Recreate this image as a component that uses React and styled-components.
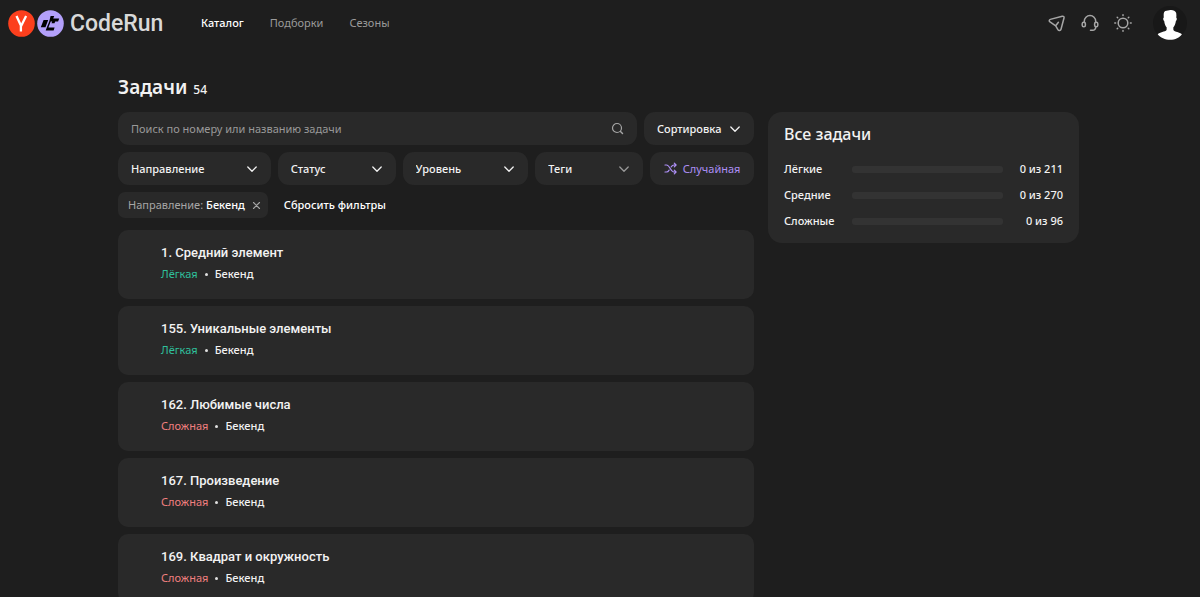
import React from 'react';
import styled, { createGlobalStyle } from 'styled-components';

const GlobalStyle = createGlobalStyle`
    * {
        box-sizing: border-box;
    }

    body {
        margin: 0;
        background-color: #1e1e1e;
        color: #f2f2f2;
        font-family: "Noto Sans", "Open Sans", sans-serif;
        font-size: 11px;
        line-height: 18px;
    }

    button, input, select {
        font: inherit;
        color: inherit;
        border: 0;
        margin: 0;
        background: none;
    }

    button {
        cursor: pointer;
    }

    a {
        color: inherit;
        text-decoration: none;
    }

    svg {
        display: block;
        flex-shrink: 0;
    }
`;

const Header = styled.header`
    display: flex;
    align-items: center;
    height: 46px;
    padding: 0 13px 0 8px;
`;

const Logo = styled.a`
    display: flex;
    align-items: center;
    gap: 2px;
    width: 193px;
`;

const LogoText = styled.span`
    padding: 2px 0 0 4px;
    font-family: Roboto, sans-serif;
    font-size: 23px;
    line-height: 28px;
    font-weight: 500;
    color: #d9d9d9;
`;

const Nav = styled.nav`
    display: flex;
    gap: 26px;
    flex: 1;
`;

const NavLink = styled.a`
    color: ${({ $active }) => ($active ? '#ffffff' : '#9a9a9a')};
    font-weight: ${({ $active }) => ($active ? 500 : 400)};
`;

const HeaderActions = styled.div`
    display: flex;
    align-items: center;
    gap: 15px;
`;

const IconButton = styled.button`
    padding: 0;
    color: #a6a6a6;
`;

const AvatarButton = styled.button`
    margin-left: 6px;
    padding: 0;
`;

const Layout = styled.div`
    padding: 28px 121px 0 118px;
`;

const PageTitle = styled.h1`
    display: flex;
    align-items: baseline;
    gap: 6px;
    margin: 0 0 12px;
    font-size: 19px;
    line-height: 26px;
    font-weight: 600;
`;

const Count = styled.span`
    font-size: 12px;
    line-height: 18px;
    font-weight: 500;
`;

const Columns = styled.div`
    display: grid;
    grid-template-columns: minmax(0, 1fr) 311px;
    align-items: start;
    gap: 14px;
`;

const Toolbar = styled.div`
    display: flex;
    gap: 7px;
    margin-bottom: 7px;
`;

const SearchBox = styled.label`
    display: flex;
    align-items: center;
    flex: 1;
    height: 33px;
    padding: 0 13px;
    border-radius: 11px;
    background-color: #292929;
    color: #a6a6a6;
`;

const SearchInput = styled.input`
    flex: 1;
    min-width: 0;
    padding: 0;
    outline: none;

    &::placeholder {
        color: #999999;
        opacity: 1;
    }
`;

const SelectBox = styled.div`
    display: grid;
    align-items: center;
    flex: ${({ $grow }) => $grow || '0 0 110px'};
    height: 33px;
    border-radius: 11px;
    background-color: #292929;

    svg {
        grid-area: 1 / 1;
        justify-self: end;
        margin-right: 13px;
        color: ${({ $dim }) => ($dim ? '#999999' : '#f2f2f2')};
        pointer-events: none;
    }
`;

const Select = styled.select`
    grid-area: 1 / 1;
    width: 100%;
    height: 33px;
    padding: 0 26px 0 13px;
    appearance: none;
    font-weight: 500;
`;

const RandomButton = styled.button`
    display: flex;
    align-items: center;
    justify-content: center;
    gap: 6px;
    flex: 104 1 0;
    height: 33px;
    padding: 0;
    border-radius: 11px;
    background-color: #292929;
    color: #ad8ff5;
`;

const Applied = styled.div`
    display: flex;
    align-items: center;
    gap: 16px;
    margin-bottom: 12px;
`;

const Chip = styled.span`
    display: flex;
    align-items: center;
    gap: 3px;
    height: 26px;
    padding: 0 7px 0 10px;
    border-radius: 7px;
    background-color: #292929;
    color: #a6a6a6;

    b {
        color: #ffffff;
        font-weight: 500;
    }

    button {
        padding: 0;
        margin-left: 4px;
    }
`;

const ResetButton = styled.button`
    padding: 0;
    color: #ffffff;
    font-weight: 500;
`;

const TaskList = styled.ul`
    display: flex;
    flex-direction: column;
    gap: 7px;
    margin: 0;
    padding: 0;
    list-style: none;
`;

const TaskCard = styled.li`
    padding: 13px 43px 16px;
    border-radius: 10px;
    background-color: #292929;
`;

const TaskTitle = styled.a`
    display: block;
    margin-bottom: 2px;
    font-family: Roboto, sans-serif;
    font-size: 13px;
    line-height: 20px;
    font-weight: 500;
`;

const TaskMeta = styled.div`
    display: flex;
    align-items: center;
    gap: 6px;
    font-weight: 500;
`;

const Level = styled.span`
    color: ${({ $hard }) => ($hard ? '#f07f7f' : '#2fc09c')};
    font-weight: 400;
`;

const Dot = styled.span`
    width: 3px;
    height: 3px;
    margin: 0 1px;
    border-radius: 50%;
    background-color: #e0e0e0;
`;

const Stats = styled.aside`
    padding: 11px 16px 12px;
    border-radius: 14px;
    background-color: #292929;
`;

const StatsTitle = styled.h2`
    margin: 0 0 14px;
    font-size: 16px;
    line-height: 22px;
    font-weight: 500;
`;

const StatsRow = styled.div`
    display: grid;
    grid-template-columns: 60px 1fr 52px;
    align-items: center;
    gap: 8px;
    height: 20px;
    font-weight: 500;

    & + & {
        margin-top: 6px;
    }
`;

const Bar = styled.progress`
    width: 100%;
    height: 7px;
    border: 0;
    appearance: none;
    border-radius: 3px;
    background-color: #333333;
    overflow: hidden;

    &::-webkit-progress-bar {
        background-color: #333333;
    }

    &::-webkit-progress-value {
        background-color: #ad8ff5;
    }
`;

const StatsValue = styled.span`
    text-align: right;
    white-space: nowrap;
`;

const Icon = ({ size = 18, box = 18, children }) => (
    <svg
        width={size}
        height={size}
        viewBox={`0 0 ${box} ${box}`}
        fill="none"
        stroke="currentColor"
        strokeWidth="1.5"
        strokeLinecap="round"
        strokeLinejoin="round"
        aria-hidden="true"
    >
        {children}
    </svg>
);

const Chevron = () => (
    <Icon size={12} box={12}>
        <path strokeWidth="1.3" d="M1.8 4 6 8.2 10.2 4" />
    </Icon>
);

const YandexMark = () => (
    <svg width="27" height="27" viewBox="0 0 27 27" aria-hidden="true">
        <circle cx="13.5" cy="13.5" r="13.3" fill="#fc3f1d" />
        <path d="M8.500 6 12.900 15.500v6M18.100 6 12.900 16.500" fill="none" stroke="#fff" strokeWidth="2.300" />
    </svg>
);

const RunMark = () => (
    <svg width="27" height="27" viewBox="0 0 27 27" aria-hidden="true">
        <circle cx="13.5" cy="13.5" r="13.3" fill="#b3a0fa" />
        <path d="M6.600 10h4.600l-2.700 7.200H3.800z" fill="#000" />
        <path d="M13.600 6h3.600l-1 2.600h6l-1.100 2.900h-2.900l-.7 1.800h-3l.7-1.800h-1.500l-2.300 6h6.200l-1 2.900H8.700l1.100-2.900 2.500-6.300z" fill="#000" />
    </svg>
);

const Avatar = () => (
    <svg width="34" height="34" viewBox="0 0 34 34" aria-hidden="true">
        <circle cx="17" cy="17" r="17" fill="#181818" />
        <path
            d="M11.200 6c1.200-1.800 3.400-1.100 5-1.700 2.200-.8 6.300-.1 7 2.700.3 1.500.2 3.200.1 4.700.8.300.7 2.700-.4 3.400-.4 2.700-1.300 5-2.600 6.300l.1 2.600c1.200 2 6.400 2.100 8.500 4.200-2.200 3.400-6.800 5.600-11.700 5.600S7.200 31.600 4.700 28.200c2-2.200 7.400-2.300 8.900-4.200l.1-2.600c-1.300-1.300-2.200-3.700-2.500-6.300-1.200-.8-1.300-3.100-.4-3.500-.1-1.800-.4-4 .4-5.600z"
            fill="#fff"
        />
    </svg>
);

const filters = [
    { label: 'Направление', grow: '153 1 0' },
    { label: 'Статус', grow: '118 1 0' },
    { label: 'Уровень', grow: '126 1 0' },
    { label: 'Теги', grow: '108 1 0', dim: true },
];

const tasks = [
    { id: 1, name: 'Средний элемент', level: 'Лёгкая' },
    { id: 155, name: 'Уникальные элементы', level: 'Лёгкая' },
    { id: 162, name: 'Любимые числа', level: 'Сложная' },
    { id: 167, name: 'Произведение', level: 'Сложная' },
    { id: 169, name: 'Квадрат и окружность', level: 'Сложная' },
];

const stats = [
    { label: 'Лёгкие', total: 211 },
    { label: 'Средние', total: 270 },
    { label: 'Сложные', total: 96 },
];

const FilterSelect = ({ label, grow, dim }) => (
    <SelectBox $grow={grow} $dim={dim}>
        <Select aria-label={label}>
            <option>{label}</option>
        </Select>
        <Chevron />
    </SelectBox>
);

const App = () => (
    <>
        <GlobalStyle />
        <Header>
            <Logo href="#">
                <YandexMark />
                <RunMark />
                <LogoText>CodeRun</LogoText>
            </Logo>
            <Nav>
                <NavLink href="#catalog" $active>Каталог</NavLink>
                <NavLink href="#selections">Подборки</NavLink>
                <NavLink href="#seasons">Сезоны</NavLink>
            </Nav>
            <HeaderActions>
                <IconButton aria-label="Telegram">
                    <Icon>
                        <path d="M2.300 5.400 14.200 2.200c1.200-.3 2.200.6 1.800 1.800l-3 11.300c-.4 1.500-2.300 1.800-3.100.4L7.700 11.800 2 7.900c-1.100-.8-1-2.100.3-2.500zM7.700 11.800l2.700-3.500" />
                    </Icon>
                </IconButton>
                <IconButton aria-label="Поддержка">
                    <Icon>
                        <path d="M3.300 8.500V7.300a5.700 5.700 0 0 1 11.400 0v1.200M14.700 12.500v.8a3 3 0 0 1-3 3H9.500" />
                        <rect x="1.200" y="8.300" width="3.200" height="4.400" rx="1.500" />
                        <rect x="13.600" y="8.300" width="3.200" height="4.400" rx="1.500" />
                    </Icon>
                </IconButton>
                <IconButton aria-label="Тема">
                    <Icon>
                        <circle cx="9" cy="9" r="4.800" />
                        <path d="M9 .8v.8M9 16.400v.8M.8 9h.8M16.400 9h.8M3.200 3.200l.5.5M14.300 14.300l.5.5M3.200 14.800l.5-.5M14.300 3.700l.5-.5" />
                    </Icon>
                </IconButton>
                <AvatarButton aria-label="Профиль">
                    <Avatar />
                </AvatarButton>
            </HeaderActions>
        </Header>
        <Layout>
            <PageTitle>
                Задачи <Count>54</Count>
            </PageTitle>
            <Columns>
                <main>
                    <Toolbar>
                        <SearchBox>
                            <SearchInput
                                type="text"
                                aria-label="Поиск"
                                placeholder="Поиск по номеру или названию задачи"
                            />
                            <Icon size={13} box={13}>
                                <circle cx="6" cy="6" r="4.500" strokeWidth="1.200" />
                                <path d="m9.500 9.500 2 2" />
                            </Icon>
                        </SearchBox>
                        <FilterSelect label="Сортировка" />
                    </Toolbar>
                    <Toolbar>
                        {filters.map((filter) => (
                            <FilterSelect key={filter.label} {...filter} />
                        ))}
                        <RandomButton>
                            <Icon size={13} box={13}>
                                <path
                                    strokeWidth="1.200"
                                    d="M1 3h1.500c3.500 0 4 7 7.500 7h2M1 10h1.500c1.200 0 2-.8 2.600-1.900M7.200 4.900C7.900 3.800 8.700 3 10 3h2M10.300 1.200 12.100 3l-1.800 1.800M10.300 8.200l1.800 1.800-1.800 1.800"
                                />
                            </Icon>
                            Случайная
                        </RandomButton>
                    </Toolbar>
                    <Applied>
                        <Chip>
                            Направление: <b>Бекенд</b>
                            <button aria-label="Убрать фильтр">
                                <Icon size={9} box={9}>
                                    <path strokeWidth="1.100" d="m1.500 1.500 6 6M7.500 1.500l-6 6" />
                                </Icon>
                            </button>
                        </Chip>
                        <ResetButton>Сбросить фильтры</ResetButton>
                    </Applied>
                    <TaskList>
                        {tasks.map(({ id, name, level }) => (
                            <TaskCard key={id}>
                                <TaskTitle href={`#task-${id}`}>{id}. {name}</TaskTitle>
                                <TaskMeta>
                                    <Level $hard={level === 'Сложная'}>{level}</Level>
                                    <Dot />
                                    Бекенд
                                </TaskMeta>
                            </TaskCard>
                        ))}
                    </TaskList>
                </main>
                <Stats>
                    <StatsTitle>Все задачи</StatsTitle>
                    {stats.map(({ label, total }) => (
                        <StatsRow key={label}>
                            <span>{label}</span>
                            <Bar value={0} max={total} aria-label={label} />
                            <StatsValue>0 из {total}</StatsValue>
                        </StatsRow>
                    ))}
                </Stats>
            </Columns>
        </Layout>
    </>
);

export default App;
